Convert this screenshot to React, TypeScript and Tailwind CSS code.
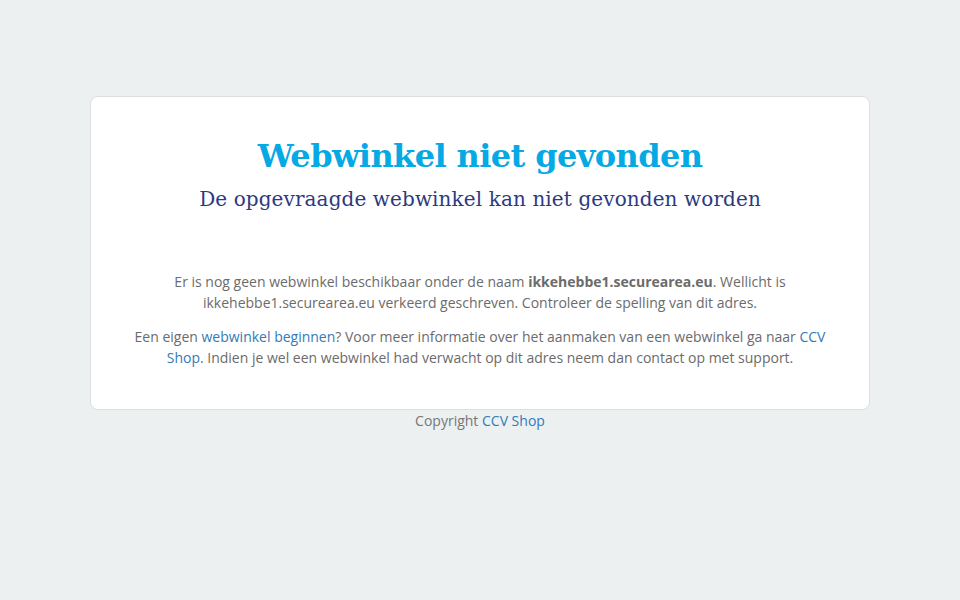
import React from "react";

export default function App() {
  return (
    <div className="min-h-[600px] w-full bg-[#ecf0f1] pt-[96px]" style={{ fontFamily: '"Open Sans", sans-serif' }}>
      <div className="mx-auto w-[780px] rounded-[8px] border border-[#dcdfe0] bg-white px-[40px] pt-[37px] pb-[41px] text-center">
        <h1 className="text-[32px] leading-[44px] font-bold text-[#05a9e4]" style={{ fontFamily: '"DejaVu Serif", serif', letterSpacing: "-0.6px" }}>
          Webwinkel niet gevonden
        </h1>
        <h2 className="mt-[6px] text-[20px] leading-[30px] font-normal text-[#2d3a7f]" style={{ fontFamily: '"DejaVu Serif", serif', letterSpacing: "0.1px" }}>
          De opgevraagde webwinkel kan niet gevonden worden
        </h2>
        <div className="mt-[57px] text-[14px] leading-[21px] text-[#6b6b6b]">
          <p>
            Er is nog geen webwinkel beschikbaar onder de naam <b className="font-bold">ikkehebbe1.securearea.eu</b>. Wellicht is ikkehebbe1.securearea.eu verkeerd geschreven. Controleer de spelling van dit adres.
          </p>
          <p className="mt-[13px]">
            Een eigen <a className="text-[#337ab7]">webwinkel beginnen</a>? Voor meer informatie over het aanmaken van een webwinkel ga naar <a className="text-[#337ab7]">CCV Shop</a>. Indien je wel een webwinkel had verwacht op dit adres neem dan contact op met support.
          </p>
        </div>
      </div>
      <div className="text-center text-[14px] leading-[21px] text-[#777777]">
        Copyright <a className="text-[#337ab7]">CCV Shop</a>
      </div>
    </div>
  );
}
